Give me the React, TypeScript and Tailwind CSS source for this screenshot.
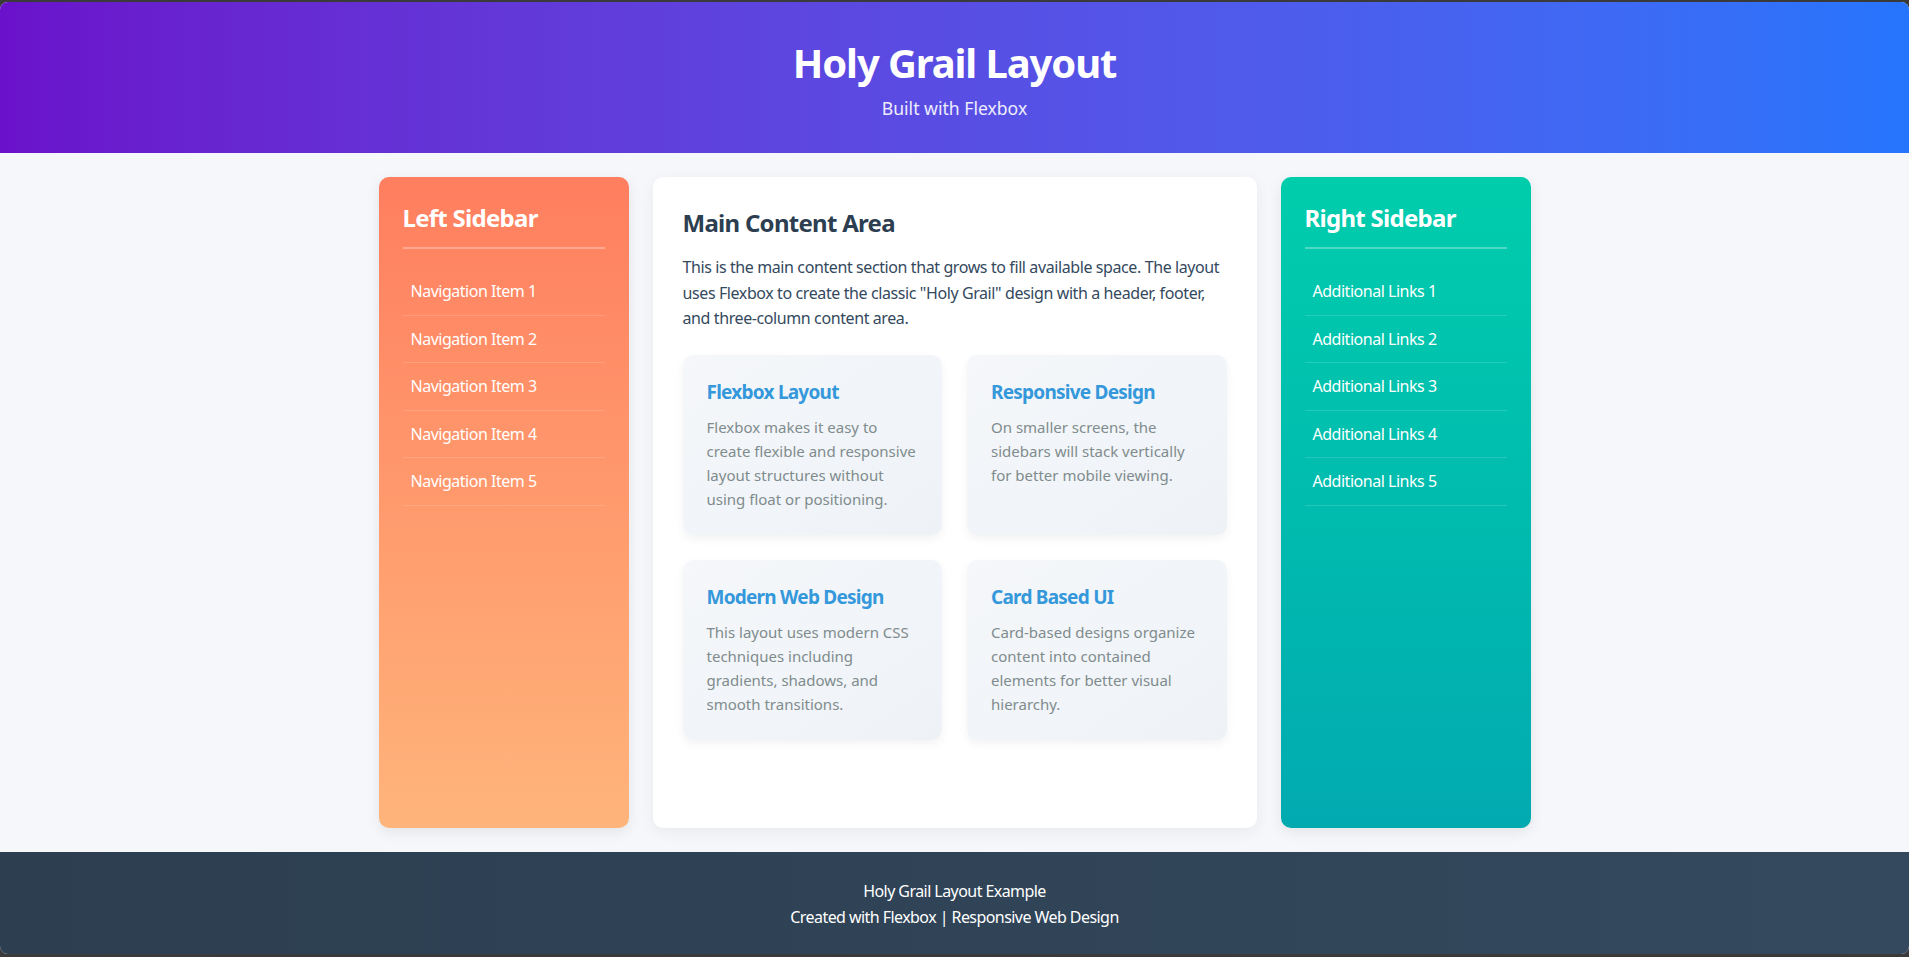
import React from "react";

const leftItems = ["Navigation Item 1", "Navigation Item 2", "Navigation Item 3", "Navigation Item 4", "Navigation Item 5"];
const rightItems = ["Additional Links 1", "Additional Links 2", "Additional Links 3", "Additional Links 4", "Additional Links 5"];

const cards = [
  { t: "Flexbox Layout", d: "Flexbox makes it easy to create flexible and responsive layout structures without using float or positioning." },
  { t: "Responsive Design", d: "On smaller screens, the sidebars will stack vertically for better mobile viewing." },
  { t: "Modern Web Design", d: "This layout uses modern CSS techniques including gradients, shadows, and smooth transitions." },
  { t: "Card Based UI", d: "Card-based designs organize content into contained elements for better visual hierarchy." },
];

function Sidebar({ title, items, bg }: { title: string; items: string[]; bg: string }) {
  return (
    <aside className={`w-[250px] shrink-0 rounded-[10px] p-6 text-white shadow-[0_4px_14px_rgba(0,0,0,0.08)] ${bg}`}>
      <h3 className="text-[24px] font-bold leading-[32px] tracking-[-0.03em] mt-[1px] pb-[13px] border-b-2 border-white/30 mb-[19px]">{title}</h3>
      <ul>
        {items.map((it) => (
          <li key={it} className="px-2 py-3 text-[16px] leading-[22.5px] tracking-[-0.03em] border-b border-white/15">
            {it}
          </li>
        ))}
      </ul>
    </aside>
  );
}

export default function App() {
  return (
    <div className="h-screen bg-[#3a3a3a] pt-[2px] pb-[3px] flex flex-col" style={{ fontFamily: '"Noto Sans", "Open Sans", sans-serif' }}>
      <div className="flex-1 flex flex-col rounded-lg overflow-hidden bg-[#f5f7fa]">
        <header className="bg-gradient-to-r from-[#6a11cb] to-[#2575fc] text-white text-center pt-[37px] pb-[32px]">
          <h1 className="text-[40px] font-bold leading-[48px] tracking-[-0.028em]">Holy Grail Layout</h1>
          <p className="text-[17.6px] leading-[26px] mt-[8px] text-white/90">Built with Flexbox</p>
        </header>
        <main className="flex-1 w-full max-w-[1200px] mx-auto px-6 py-6 flex gap-6">
          <Sidebar title="Left Sidebar" items={leftItems} bg="bg-gradient-to-b from-[#ff7e5f] to-[#feb47b]" />
          <section className="flex-1 bg-white rounded-[10px] p-[30px] shadow-[0_4px_16px_rgba(0,0,0,0.06)]">
            <h2 className="text-[24px] font-bold leading-[29px] tracking-[-0.03em] text-[#2c3e50] mt-[1px] mb-[18px]">Main Content Area</h2>
            <p className="text-[16px] leading-[25.6px] tracking-[-0.025em] text-[#34495e] mb-[23px]">
              This is the main content section that grows to fill available space. The layout uses Flexbox to create the classic "Holy Grail" design with a header, footer, and three-column content area.
            </p>
            <div className="grid grid-cols-2 gap-[25px]">
              {cards.map((c) => (
                <div key={c.t} className="rounded-[10px] bg-gradient-to-br from-[#f5f7fa] to-[#eef2f7] p-6 shadow-[0_4px_10px_rgba(0,0,0,0.05)] min-h-[180px]">
                  <h4 className="text-[19px] font-bold leading-[23px] tracking-[-0.04em] text-[#3498db] mt-[2px] mb-[11px]">{c.t}</h4>
                  <p className="text-[15px] leading-[24px] text-[#7f8c8d]">{c.d}</p>
                </div>
              ))}
            </div>
          </section>
          <Sidebar title="Right Sidebar" items={rightItems} bg="bg-gradient-to-b from-[#00cdac] to-[#02aab0]" />
        </main>
        <footer className="bg-gradient-to-r from-[#2c3e50] to-[#34495e] text-white text-center pt-[26px] pb-6 text-[16px] leading-[26px] tracking-[-0.035em]">
          <p>Holy Grail Layout Example</p>
          <p>Created with Flexbox | Responsive Web Design</p>
        </footer>
      </div>
    </div>
  );
}
